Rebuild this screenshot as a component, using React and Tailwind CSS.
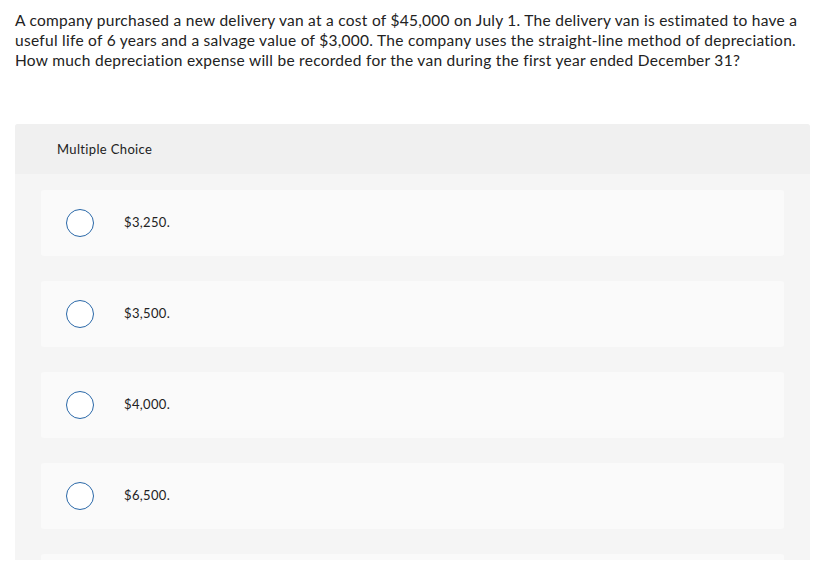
const options = ["$3,250.", "$3,500.", "$4,000.", "$6,500.", ""];

const Radio = () => (
  <span className="block w-[28px] h-[28px] rounded-full border-[1.5px] border-[#2a68a8] bg-white shrink-0" />
);

export default function App() {
  return (
    <div className="min-h-screen bg-white font-['Lato','Liberation_Sans',sans-serif] text-[#222]">
      <div className="px-[15px] pt-[10px] text-[15.5px] leading-[20px] tracking-[0.27px] whitespace-nowrap">
        A company purchased a new delivery van at a cost of $45,000 on July 1. The delivery van is estimated to have a
        <br />
        useful life of 6 years and a salvage value of $3,000. The company uses the straight-line method of depreciation.
        <br />
        How much depreciation expense will be recorded for the van during the first year ended December 31?
      </div>

      <div className="mt-[54px] ml-[15px] w-[795px] h-[436px] overflow-hidden rounded-t-[3px] bg-[#f5f5f5]">
        <div className="h-[50px] bg-[#f0f0f0] flex items-center pl-[42px] pt-[2px] text-[13px] tracking-[0.35px] text-[#222]">
          Multiple Choice
        </div>
        <div className="pt-[16px] px-[26px] flex flex-col gap-[25px]">
          {options.map((o, i) => (
            <div key={i} className="h-[66px] shrink-0 rounded-[3px] bg-[#fafafa] flex items-center pl-[25px] gap-[30px]">
              {o && <Radio />}
              {o && <span className="text-[13px] tracking-[0.35px] text-[#222]">{o}</span>}
            </div>
          ))}
        </div>
      </div>
    </div>
  );
}
